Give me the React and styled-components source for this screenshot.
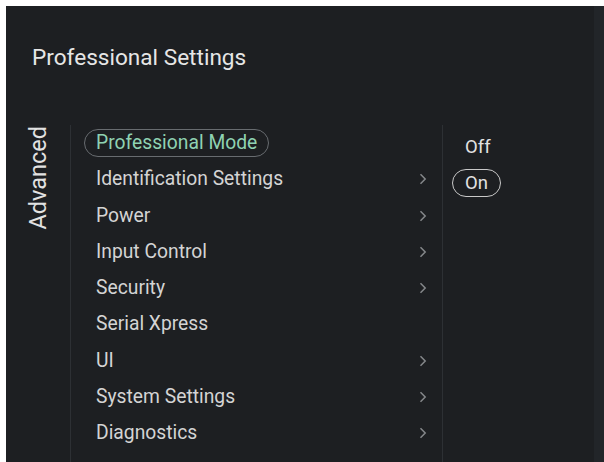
import React from "react";
import styled, { createGlobalStyle } from "styled-components";

const GlobalStyle = createGlobalStyle`
  html, body {
    margin: 0;
    padding: 0;
    background: #ffffff;
  }
  body {
    font-family: Roboto, "Liberation Sans", sans-serif;
  }
`;

const Screen = styled.div`
  margin: 6px 0 0 6px;
  width: 598px;
  height: 456px;
  box-sizing: border-box;
  background: #1d1f22;
  border-right: 10px solid #222529;
  display: flex;
  flex-direction: column;
  overflow: hidden;
`;

const Title = styled.h1`
  margin: 0;
  padding: 38px 0 0 26px;
  height: 119px;
  box-sizing: border-box;
  font-size: 22.6px;
  font-weight: 400;
  color: #e6e6e6;
`;

const Body = styled.div`
  flex: 1;
  display: flex;
`;

const Side = styled.div`
  width: 64px;
  display: flex;
  justify-content: center;
  align-items: flex-start;
  padding-top: 1px;
  border-right: 1px solid #2d3034;
`;

const SideLabel = styled.span`
  writing-mode: vertical-rl;
  transform: rotate(180deg);
  font-size: 23.5px;
  color: #e2e2e2;
`;

const Menu = styled.ul`
  list-style: none;
  margin: 0;
  padding: 0 15px 0 13px;
  width: 372px;
  box-sizing: border-box;
  border-right: 1px solid #2d3034;
`;

const Row = styled.li`
  height: 36.25px;
  display: flex;
  align-items: center;
  justify-content: space-between;
`;

const Label = styled.span`
  font-size: 19.3px;
  line-height: 26px;
  padding: 0 11px;
  border: 1.5px solid ${(p) => (p.$active ? "#686c70" : "transparent")};
  border-radius: 14px;
  color: ${(p) => (p.$active ? "#8fd2b2" : "#d4d4d4")};
`;

const Chevron = styled.svg`
  width: 8px;
  height: 12px;
  flex: none;
`;

const Options = styled.ul`
  list-style: none;
  margin: 0;
  padding: 4px 0 0 9px;
`;

const Option = styled.li`
  height: 36px;
  display: flex;
  align-items: center;
`;

const OptionLabel = styled.span`
  font-size: 18.5px;
  line-height: 26px;
  padding: 0 12px;
  border: 1.5px solid ${(p) => (p.$selected ? "#c9c9c9" : "transparent")};
  border-radius: 15px;
  color: #e2e2e2;
`;

const items = [
  { label: "Professional Mode", active: true },
  { label: "Identification Settings", sub: true },
  { label: "Power", sub: true },
  { label: "Input Control", sub: true },
  { label: "Security", sub: true },
  { label: "Serial Xpress" },
  { label: "UI", sub: true },
  { label: "System Settings", sub: true },
  { label: "Diagnostics", sub: true },
];

const Arrow = () => (
  <Chevron viewBox="0 0 8 12">
    <path d="M1.5 1.3 L6.2 6 L1.5 10.7" fill="none" stroke="#85888b" strokeWidth="1.5" />
  </Chevron>
);

export default function App() {
  return (
    <>
      <GlobalStyle />
      <Screen>
        <Title>Professional Settings</Title>
        <Body>
          <Side>
            <SideLabel>Advanced</SideLabel>
          </Side>
          <Menu>
            {items.map((it) => (
              <Row key={it.label}>
                <Label $active={it.active}>{it.label}</Label>
                {it.sub && <Arrow />}
              </Row>
            ))}
          </Menu>
          <Options>
            <Option>
              <OptionLabel>Off</OptionLabel>
            </Option>
            <Option>
              <OptionLabel $selected>On</OptionLabel>
            </Option>
          </Options>
        </Body>
      </Screen>
    </>
  );
}
